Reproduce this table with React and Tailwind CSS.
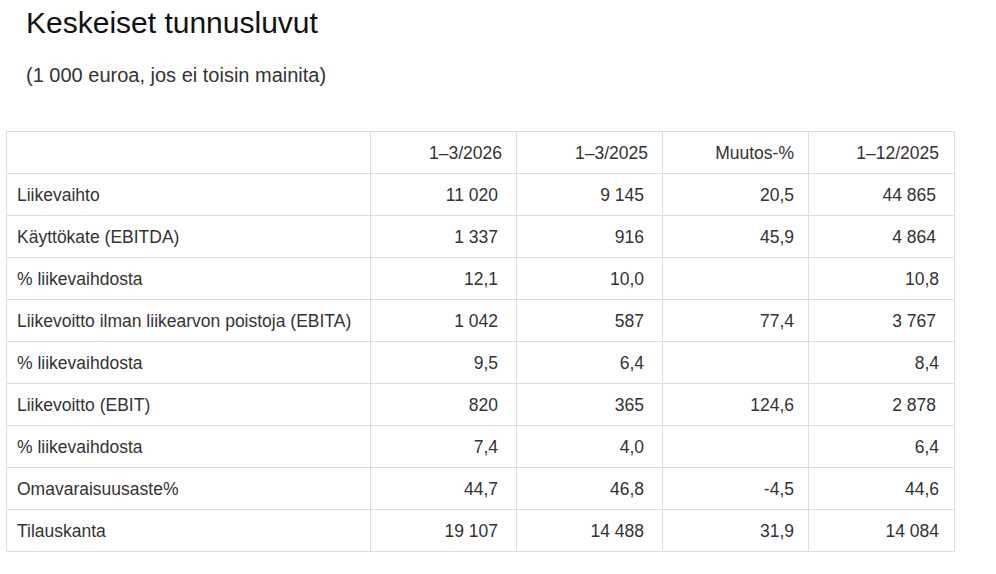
import React from "react";

const rows = [
  ["Liikevaihto", "11 020", "9 145", "20,5", "44 865", true],
  ["Käyttökate (EBITDA)", "1 337", "916", "45,9", "4 864", true],
  ["% liikevaihdosta", "12,1", "10,0", "", "10,8", false],
  ["Liikevoitto ilman liikearvon poistoja (EBITA)", "1 042", "587", "77,4", "3 767", true],
  ["% liikevaihdosta", "9,5", "6,4", "", "8,4", false],
  ["Liikevoitto (EBIT)", "820", "365", "124,6", "2 878", true],
  ["% liikevaihdosta", "7,4", "4,0", "", "6,4", false],
  ["Omavaraisuusaste%", "44,7", "46,8", "-4,5", "44,6", false],
  ["Tilauskanta", "19 107", "14 488", "31,9", "14 084", false],
];

export default function App() {
  return (
    <div className="min-h-[574px] bg-white font-['Liberation_Sans',Arial,sans-serif] text-[#333]">
      <div className="pl-[26px] pt-[6px]">
        <h1 className="text-[30px] leading-[34px] text-[#111]">Keskeiset tunnusluvut</h1>
        <p className="mt-[24px] text-[20px] leading-[23px] text-[#333]">
          (1 000 euroa, jos ei toisin mainita)
        </p>
      </div>

      <div className="pl-[6px] pt-[44px]">
        <table className="w-[948px] table-fixed border-collapse text-[17.5px] leading-[20px]">
          <colgroup>
            <col className="w-[364px]" />
            <col className="w-[146px]" />
            <col className="w-[146px]" />
            <col className="w-[146px]" />
            <col className="w-[146px]" />
          </colgroup>
          <thead>
            <tr className="h-[42px]">
              <th className="border border-[#dddddd] p-0" />
              <th className="border border-[#dddddd] pr-[14px] text-right font-normal">1–3/2026</th>
              <th className="border border-[#dddddd] pr-[14px] text-right font-normal">1–3/2025</th>
              <th className="border border-[#dddddd] pr-[14px] text-right font-normal">Muutos-%</th>
              <th className="border border-[#dddddd] pr-[15px] text-right font-normal">1–12/2025</th>
            </tr>
          </thead>
          <tbody>
            {rows.map((r, i) => (
              <tr key={i} className="h-[42px]">
                <td className="border border-[#dddddd] pl-[10px] text-left">{r[0]}</td>
                <td className="border border-[#dddddd] pr-[18px] text-right">{r[1]}</td>
                <td className="border border-[#dddddd] pr-[18px] text-right">{r[2]}</td>
                <td className="border border-[#dddddd] pr-[14px] text-right">{r[3]}</td>
                <td
                  className={
                    r[5]
                      ? "border border-[#dddddd] pr-[18px] text-right"
                      : "border border-[#dddddd] pr-[15px] text-right"
                  }
                >
                  {r[4]}
                </td>
              </tr>
            ))}
          </tbody>
        </table>
      </div>
    </div>
  );
}
